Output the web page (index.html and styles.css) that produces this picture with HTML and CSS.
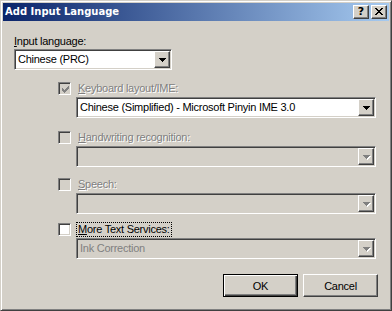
FILE: index.html
```html
<!DOCTYPE html>
<html>
<head>
<meta charset="utf-8">
<link rel="stylesheet" href="styles.css">
</head>
<body>
<div class="window">
  <div class="titlebar">
    <span class="title">Add Input Language</span>
    <div class="caption-buttons">
      <span class="cap-btn help">?</span>
      <span class="cap-btn close"><svg width="8" height="7" viewBox="0 0 8 7" shape-rendering="crispEdges"><path fill="#000" d="M0 0h2v1h-2z M6 0h2v1h-2z M1 1h2v1h-2z M5 1h2v1h-2z M2 2h4v1h-4z M3 3h2v1h-2z M2 4h4v1h-4z M1 5h2v1h-2z M5 5h2v1h-2z M0 6h2v1h-2z M6 6h2v1h-2z"/></svg></span>
    </div>
  </div>
  <div class="content">
    <div class="field-label"><u>I</u>nput language:</div>
    <div class="combo combo-lang">
      <span class="combo-text">Chinese (PRC)</span>
      <span class="combo-btn"><svg width="7" height="4" viewBox="0 0 7 4" shape-rendering="crispEdges"><path fill="#000" d="M0 0h7v1h-7z M1 1h5v1h-5z M2 2h3v1h-3z M3 3h1v1h-1z"/></svg></span>
    </div>
    <div class="options">
      <div class="group g1">
        <div class="check-row">
          <span class="checkbox disabled"><svg width="7" height="7" viewBox="0 0 7 7" shape-rendering="crispEdges"><path fill="#808080" d="M6 0h1v1h-1z M5 1h2v1h-2z M0 2h1v1h-1z M4 2h3v1h-3z M0 3h2v1h-2z M3 3h3v1h-3z M0 4h5v1h-5z M1 5h3v1h-3z M2 6h1v1h-1z"/></svg></span>
          <span class="check-label disabled"><u>K</u>eyboard layout/IME:</span>
        </div>
        <div class="combo combo-wide">
          <span class="combo-text">Chinese (Simplified) - Microsoft Pinyin IME 3.0</span>
          <span class="combo-btn"><svg width="7" height="4" viewBox="0 0 7 4" shape-rendering="crispEdges"><path fill="#000" d="M0 0h7v1h-7z M1 1h5v1h-5z M2 2h3v1h-3z M3 3h1v1h-1z"/></svg></span>
        </div>
      </div>
      <div class="group g2">
        <div class="check-row">
          <span class="checkbox disabled"></span>
          <span class="check-label disabled"><u>H</u>andwriting recognition:</span>
        </div>
        <div class="combo combo-wide disabled">
          <span class="combo-text"></span>
          <span class="combo-btn"><svg width="8" height="5" viewBox="0 0 8 5" shape-rendering="crispEdges"><path fill="#fff" d="M1 1h7v1h-7z M2 2h5v1h-5z M3 3h3v1h-3z M4 4h1v1h-1z"/><path fill="#808080" d="M0 0h7v1h-7z M1 1h5v1h-5z M2 2h3v1h-3z M3 3h1v1h-1z"/></svg></span>
        </div>
      </div>
      <div class="group g3">
        <div class="check-row">
          <span class="checkbox disabled"></span>
          <span class="check-label disabled"><u>S</u>peech:</span>
        </div>
        <div class="combo combo-wide disabled">
          <span class="combo-text"></span>
          <span class="combo-btn"><svg width="8" height="5" viewBox="0 0 8 5" shape-rendering="crispEdges"><path fill="#fff" d="M1 1h7v1h-7z M2 2h5v1h-5z M3 3h3v1h-3z M4 4h1v1h-1z"/><path fill="#808080" d="M0 0h7v1h-7z M1 1h5v1h-5z M2 2h3v1h-3z M3 3h1v1h-1z"/></svg></span>
        </div>
      </div>
      <div class="group g4">
        <div class="check-row">
          <span class="checkbox"></span>
          <span class="check-label focused"><u>M</u>ore Text Services:</span>
        </div>
        <div class="combo combo-wide disabled">
          <span class="combo-text">Ink Correction</span>
          <span class="combo-btn"><svg width="8" height="5" viewBox="0 0 8 5" shape-rendering="crispEdges"><path fill="#fff" d="M1 1h7v1h-7z M2 2h5v1h-5z M3 3h3v1h-3z M4 4h1v1h-1z"/><path fill="#808080" d="M0 0h7v1h-7z M1 1h5v1h-5z M2 2h3v1h-3z M3 3h1v1h-1z"/></svg></span>
        </div>
      </div>
    </div>
    <div class="buttons">
      <button class="btn btn-default">OK</button>
      <button class="btn">Cancel</button>
    </div>
  </div>
</div>
</body>
</html>
```

FILE: styles.css
```css
* { box-sizing: border-box; }
html, body { margin: 0; padding: 0; background: #d4d0c8; }
body {
  font-family: "Liberation Sans", Arial, sans-serif;
  font-size: 11px;
  letter-spacing: -0.25px;
  color: #000;
}
.window {
  width: 392px;
  height: 311px;
  background: #d4d0c8;
  border: 1px solid;
  border-color: #d4d0c8 #404040 #404040 #d4d0c8;
  box-shadow: inset 1px 1px 0 #fff, inset -1px -1px 0 #808080;
  padding: 2px;
  display: flex;
  flex-direction: column;
}
.titlebar {
  height: 18px;
  background: linear-gradient(to right, #0a246a, #a6caf0);
  display: flex;
  align-items: center;
  justify-content: space-between;
  padding: 0 2px 0 2px;
}
.title {
  font-family: "DejaVu Sans", sans-serif;
  font-weight: bold;
  font-size: 10px;
  letter-spacing: 0;
  color: #fff;
  line-height: 18px;
}
.caption-buttons {
  display: flex;
  gap: 2px;
}
.cap-btn {
  width: 16px;
  height: 14px;
  background: #d4d0c8;
  border: 1px solid;
  border-color: #fff #404040 #404040 #fff;
  box-shadow: inset -1px -1px 0 #808080;
  display: flex;
  align-items: center;
  justify-content: center;
}
.help {
  font-family: "DejaVu Sans", sans-serif;
  font-weight: bold;
  font-size: 11px;
  letter-spacing: 0;
  line-height: 12px;
  color: #000;
  padding-bottom: 1px;
}
.close svg { display: block; margin: 0 1px 1px 0; }
.content {
  flex: 1;
  padding: 14px 11px 0 11px;
  display: flex;
  flex-direction: column;
}
.field-label {
  line-height: 13px;
  height: 13px;
}
.combo {
  height: 21px;
  background: #fff;
  border: 1px solid;
  border-color: #808080 #fff #fff #808080;
  box-shadow: inset 1px 1px 0 #404040, inset -1px -1px 0 #d4d0c8;
  padding: 1px;
  display: flex;
  align-items: center;
  margin-top: 1px;
}
.combo.disabled { background: #d4d0c8; }
.combo-lang { width: 158px; }
.combo-wide { width: 300px; }
.combo-text {
  flex: 1;
  padding-left: 2px;
  line-height: 17px;
  white-space: nowrap;
  overflow: hidden;
}
.combo.disabled .combo-text { color: #808080; }
.combo-btn {
  width: 16px;
  height: 17px;
  background: #d4d0c8;
  border: 1px solid;
  border-color: #fff #404040 #404040 #fff;
  box-shadow: inset -1px -1px 0 #808080;
  display: flex;
  align-items: center;
  justify-content: center;
}
.combo-btn svg { display: block; margin: 1px 0 0 0; }
.combo.disabled .combo-btn svg { margin: 2px 0 0 1px; }
.options {
  padding-left: 44px;
  display: flex;
  flex-direction: column;
}
.group { display: flex; flex-direction: column; }
.group .combo { margin-left: 18px; }
.g1 { margin-top: 11px; }
.g2 { margin-top: 12px; }
.g3 { margin-top: 10px; }
.g4 { margin-top: 8px; }
.check-row {
  display: flex;
  align-items: center;
  height: 15px;
  gap: 5px;
}
.checkbox {
  width: 13px;
  height: 13px;
  background: #fff;
  border: 1px solid;
  border-color: #808080 #fff #fff #808080;
  box-shadow: inset 1px 1px 0 #404040, inset -1px -1px 0 #d4d0c8;
  padding: 2px;
  display: block;
}
.checkbox.disabled { background: #d4d0c8; }
.checkbox svg { display: block; margin: 1px 0 0 1px; }
.check-label {
  border: 1px solid transparent;
  padding: 0 1px;
  line-height: 13px;
  height: 15px;
  white-space: nowrap;
}
.check-label.disabled {
  color: #808080;
  text-shadow: 1px 1px 0 #fff;
}
.check-label.focused {
  border: 1px dotted #000;
}
.buttons {
  display: flex;
  justify-content: flex-end;
  gap: 5px;
  margin-top: 15px;
}
.btn {
  width: 75px;
  height: 23px;
  margin: 0;
  padding: 0;
  font-family: "Liberation Sans", Arial, sans-serif;
  font-size: 11px;
  letter-spacing: -0.25px;
  color: #000;
  background: #d4d0c8;
  border: 1px solid;
  border-color: #fff #404040 #404040 #fff;
  box-shadow: inset -1px -1px 0 #808080;
  border-radius: 0;
}
.btn-default {
  border: 1px solid #000;
  box-shadow: inset 1px 1px 0 #fff, inset -1px -1px 0 #404040, inset -2px -2px 0 #808080;
}
```
